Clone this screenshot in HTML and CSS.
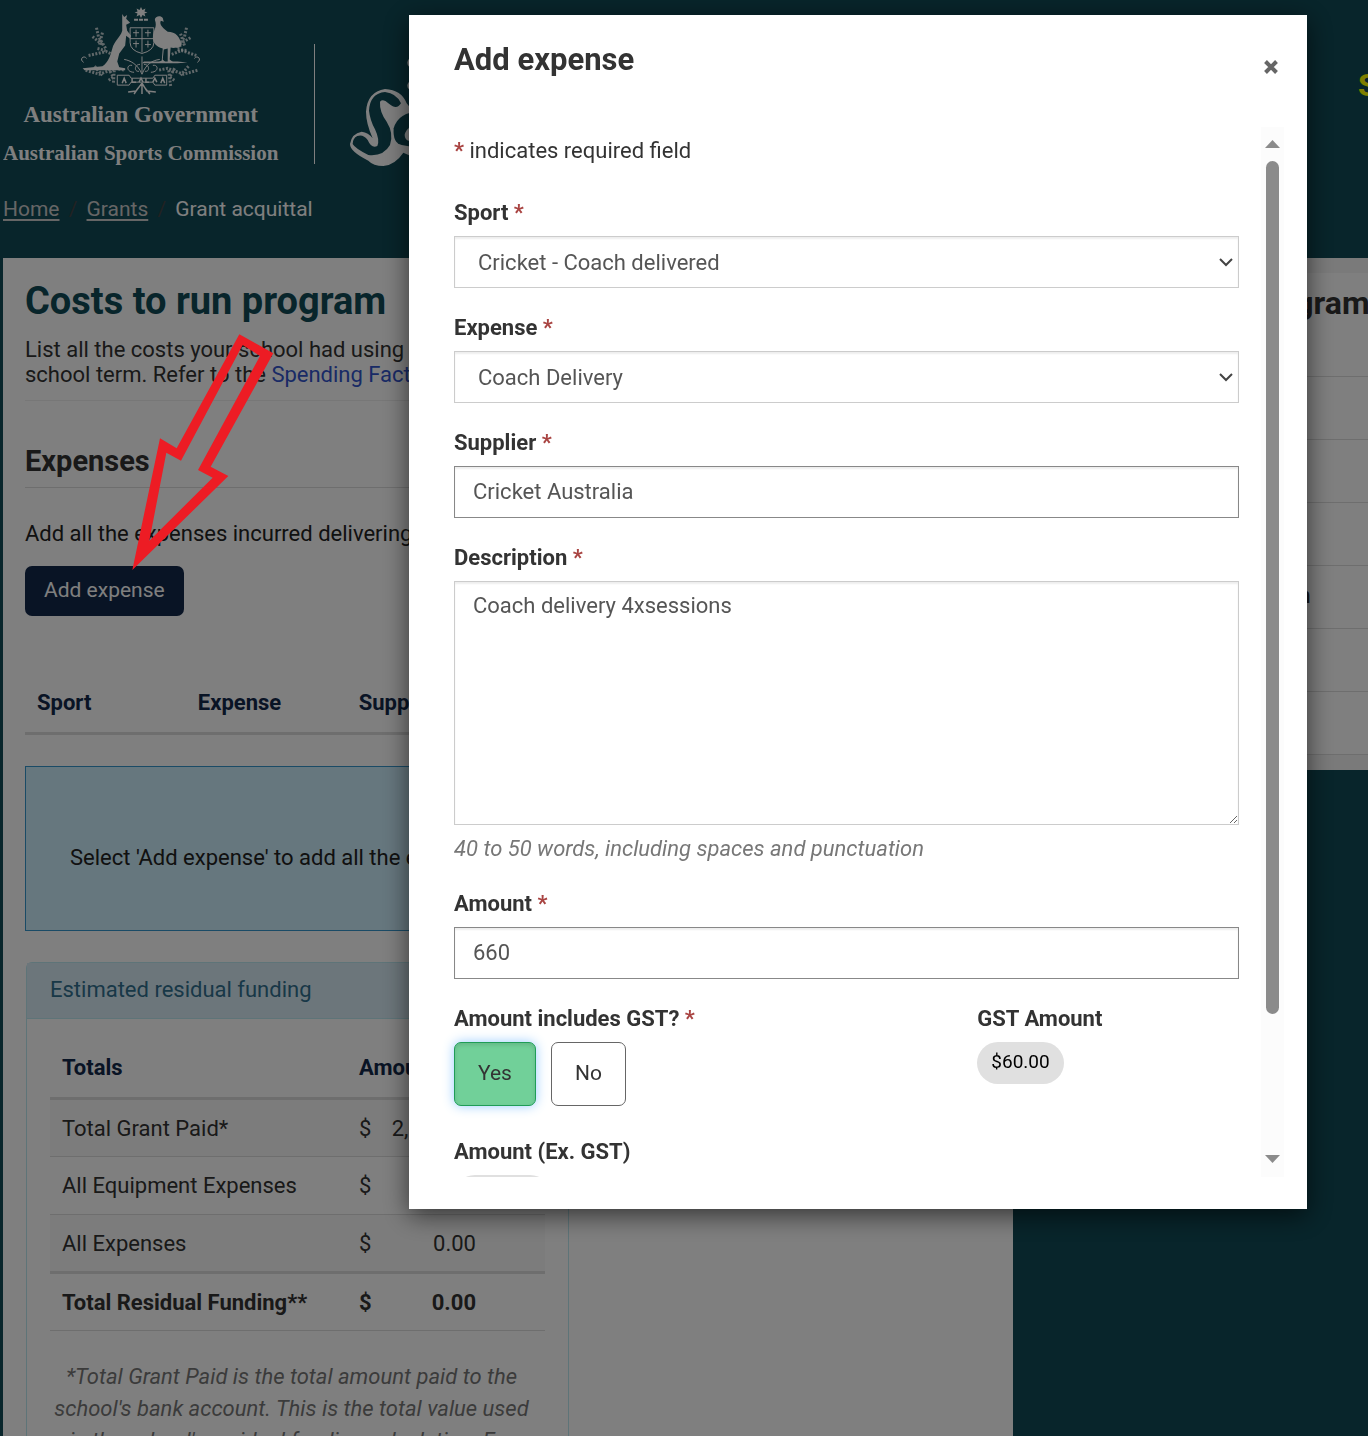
FILE: index.html
```html
<!DOCTYPE html>
<html lang="en">
<head>
<meta charset="utf-8">
<title>Grant acquittal</title>
<link rel="stylesheet" href="styles.css">
</head>
<body>
<div class="page">
  <header class="header">
    <div class="brand">
      <svg class="crest" viewBox="0 0 122 90" aria-hidden="true">
        <g fill="#fff">
          <path d="M61 0l1.500 3 3-1.500-1 3 3 1-3 1 1 3-3-1.500-1.500 3-1.500-3-3 1.500 1-3-3-1 3-1-1-3 3 1.500z"/>
          <path d="M42 7l2 3 3-2-1 4 4 4-4 2 1 6 4 5-1 3-4-3-1 10-6 8-2 8 2 6 6 1v2H4l-2-2 20-2c6-4 8-11 10-18 2-8 8-11 10-18z"/>
          <path d="M75 13c0-4 6-5 8-2l1 4-3-1c-2 4 3 8 7 11 8 0 13 5 14 15-5 1-8 2-11 1l-1 12 4 3h-6V42l-4 1-1 10 3 3h-8l4-2 1-12c-7-2-10-6-10-11 0-8 5-10 2-18z"/>
          <path d="M64 55h34l10 1-10 1H62z"/>
        </g>
        <g fill="none" stroke="#fff" stroke-width="1">
          <path d="M54 13h4M59 13h4M64 13h4" stroke-width="2"/>
          <path d="M50 21h24v15q0 8-12 11-12-3-12-11zM62 21v25M50 32h24M56 23v7M53 26h6M68 23v7M65 26h6M56 34v7M53 37h6M68 34v7M65 38h6"/>
          <path d="M62 68C58 58 50 54 44 53M62 68c4-10 10-14 18-15M62 66V50M60 58c-6 0-6 8-1 7M64 58c6 0 6 8 1 7M54 66c-8 0-8-8-2-7M71 66c8 0 8-8 2-7"/>
          <path d="M3 56c-5-3 0-8 3-4M118 56c5-3 0-8-3-4"/>
          <path d="M37 69h12l2 3h22l2-3h12v10H75l-2-3H51l-2 3H37z"/>
          <path d="M42 77l2-5 2 5M52 72v4h4M59 76l2-4 2 4M66 72v4h3M73 76l2-4 2 4M81 77l2-5 2 5" stroke-width="1.500"/>
          <path d="M62 77l-6 8-8 1M62 77l5 8 9 1M62 77v11M58 82l-4 6M65 82l5 6" stroke-width="1.500"/>
        </g>
        <g fill="none" stroke="#fff" stroke-opacity=".75" stroke-width="3" stroke-dasharray="2 1.500">
          <path d="M16 21l2 9 8 13M12 30l10 8M22 26l-3 12M17 42l8 2"/>
          <path d="M107 21l-2 9-8 13M111 31l-10 6M101 27l4 12M98 43l10 1"/>
          <path d="M8 49l18-4 8 4M117 49l-15-5-10 4"/>
          <path d="M5 64l14 4 16-6 10 2M14 60l8 9M28 62l5 9-6 4M34 64l-1 14"/>
          <path d="M118 64l-14 4-16-6-10 2M109 60l-8 9M95 62l-5 9 6 4M89 64l2 16"/>
        </g>
      </svg>
      <span class="brand-gov">Australian Government</span>
      <span class="brand-org">Australian Sports Commission</span>
    </div>
    <div class="partner">
      <svg viewBox="30 12 300 360" class="partner-logo" aria-hidden="true">
        <path fill="#fff" d="M30 312Q35 280 65 275Q85 277 98 295Q78 250 78 215Q82 155 135 147Q185 150 200 190L240 240V360L190 338Q165 375 130 378Q100 378 85 362Q30 335 30 312z"/>
        <path fill="#104a56" d="M183 190Q170 160 135 156Q90 160 87 212Q90 240 105 268Q120 300 112 318Q95 327 83 300Q70 282 52 288Q38 295 38 312Q45 325 85 345Q130 350 150 315Q162 280 140 245Q118 215 120 185Q130 175 145 190Q170 212 183 190z"/>
        <path fill="#104a56" d="M240 215Q175 215 161 265Q158 310 185 315L240 325z"/>
        <path fill="#fff" d="M240 255Q200 255 194 285Q194 302 210 303L240 300z"/>
        <circle cx="218" cy="68" r="16" fill="#fff"/><circle cx="215" cy="137" r="13" fill="#fff"/>
      </svg>
    </div>
    <a class="login" href="#">Sporting Schools</a>
  </header>
  <nav class="crumbs" aria-label="Breadcrumb">
    <a href="#">Home</a><span class="slash">/</span><a href="#">Grants</a><span class="slash">/</span><span>Grant acquittal</span>
  </nav>
  <div class="columns">
    <main class="sheet">
      <h1>Costs to run program</h1>
      <p class="intro">List all the costs your school had using the funding this<br>school term. Refer to the <a href="#">Spending Fact Sheet</a></p>
      <h2>Expenses</h2>
      <p class="lead">Add all the expenses incurred delivering the program</p>
      <button class="primary" type="button">Add expense</button>
      <table class="expenses">
        <thead><tr><th>Sport</th><th>Expense</th><th>Supplier</th><th></th><th></th><th></th></tr></thead>
      </table>
      <div class="notice">Select 'Add expense' to add all the expenses</div>
      <section class="panel">
        <h3>Estimated residual funding</h3>
        <div class="panel-body">
          <table class="totals">
            <colgroup><col class="col-name"><col class="col-sign"><col></colgroup>
            <thead><tr><th>Totals</th><th colspan="2">Amount</th></tr></thead>
            <tbody>
              <tr class="odd"><td>Total Grant Paid*</td><td>$</td><td class="num">2,000.00</td></tr>
              <tr><td>All Equipment Expenses</td><td>$</td><td class="num">0.00</td></tr>
              <tr class="odd"><td>All Expenses</td><td>$</td><td class="num">0.00</td></tr>
            </tbody>
            <tfoot><tr><td>Total Residual Funding**</td><td>$</td><td class="num">0.00</td></tr></tfoot>
          </table>
          <p class="note">*Total Grant Paid is the total amount paid to the school's bank account. This is the total value used in the school's residual funding calculation. For</p>
        </div>
      </section>
    </main>
    <aside class="side">
      <h2>Running the program</h2>
      <ul><li></li><li></li><li></li><li>Community organisation</li><li></li><li></li></ul>
    </aside>
  </div>
</div>

<div class="overlay">
  <section class="modal" role="dialog" aria-labelledby="modal-title">
    <div class="modal-head">
      <h2 id="modal-title">Add expense</h2>
      <button class="close" type="button" aria-label="Close"><svg viewBox="0 0 16 16" aria-hidden="true"><path d="M2.500 2.500l11 11M13.500 2.500l-11 11" stroke="#666" stroke-width="4"/></svg></button>
    </div>
    <div class="modal-body">
      <form class="form">
        <p class="hint"><span class="req">*</span> indicates required field</p>
        <div class="field">
          <label for="sport">Sport <span class="req">*</span></label>
          <div class="select"><select id="sport"><option>Cricket - Coach delivered</option></select><svg viewBox="0 0 14 9" aria-hidden="true"><path d="M1 1l6 6 6-6" fill="none" stroke="#444" stroke-width="2"/></svg></div>
        </div>
        <div class="field">
          <label for="expense">Expense <span class="req">*</span></label>
          <div class="select"><select id="expense"><option>Coach Delivery</option></select><svg viewBox="0 0 14 9" aria-hidden="true"><path d="M1 1l6 6 6-6" fill="none" stroke="#444" stroke-width="2"/></svg></div>
        </div>
        <div class="field">
          <label for="supplier">Supplier <span class="req">*</span></label>
          <input id="supplier" type="text" value="Cricket Australia">
        </div>
        <div class="field">
          <label for="description">Description <span class="req">*</span></label>
          <textarea id="description">Coach delivery 4xsessions</textarea>
          <p class="help">40 to 50 words, including spaces and punctuation</p>
        </div>
        <div class="field">
          <label for="amount">Amount <span class="req">*</span></label>
          <input id="amount" type="text" value="660">
        </div>
        <div class="gst">
          <div class="field">
            <span class="label">Amount includes GST? <span class="req">*</span></span>
            <div class="choices"><button class="choice chosen" type="button">Yes</button><button class="choice" type="button">No</button></div>
          </div>
          <div class="field">
            <span class="label">GST Amount</span>
            <output class="pill">$60.00</output>
          </div>
        </div>
        <div class="field">
          <span class="label">Amount (Ex. GST)</span>
          <output class="pill">$600.00</output>
        </div>
      </form>
      <div class="scrollbar" aria-hidden="true">
        <svg viewBox="0 0 15 8"><path d="M0 8L7.500 0 15 8z" fill="#8b8b8b"/></svg>
        <div class="track"><div class="thumb"></div></div>
        <svg viewBox="0 0 15 8"><path d="M0 0L7.500 8 15 0z" fill="#8b8b8b"/></svg>
      </div>
    </div>
  </section>
</div>
<svg class="pointer" viewBox="390 279 435 714" aria-hidden="true"><path fill="#ed1c24" fill-rule="evenodd" d="M718 283L820 340 632 680 685 708 397 990 480 595 530 625zM728 315L780 348 594 690 638 713 448 902 499 638 543 662z"/></svg>
</body>
</html>
```
FILE: styles.css
```css
* { box-sizing: border-box; }
html, body { height: 100%; }
body {
  margin: 0;
  overflow: hidden;
  background: #104a56;
  color: #333;
  font-family: Roboto, "Liberation Sans", sans-serif;
  font-size: 22px;
  line-height: 25px;
}
h1, h2, h3, p, ul { margin: 0; }
button, input, select, textarea { font: inherit; color: inherit; }
.page { height: 100%; overflow: hidden; padding-left: 3px; }

/* Site header */
.header {
  display: grid;
  grid-template-columns: auto 1fr 10px;
  height: 173px;
  overflow: hidden;
  color: #fff;
}
.brand {
  display: flex;
  flex-direction: column;
  align-items: center;
  padding-top: 7px;
  font: bold 23px/38px "Liberation Serif", serif;
}
.brand-org { font-size: 21px; }
.crest { width: 122px; height: 89px; }
.partner {
  margin: 44px 0 9px 36px;
  padding: 0 0 0 35px;
  border-left: 1px solid #fff;
}
.partner-logo { display: block; width: 100px; height: 120px; overflow: visible; }
.login {
  padding-top: 66px;
  color: #ff0;
  font-size: 32px;
  font-weight: bold;
  line-height: 38px;
  text-decoration: none;
  white-space: nowrap;
}
.crumbs { display: flex; height: 85px; padding-top: 24px; color: #fff; font-size: 21px; }
.crumbs a { color: #ccc; text-decoration-thickness: 2px; text-underline-offset: 3px; }
.slash { width: 27px; text-align: center; color: #444; }

.columns { display: grid; grid-template-columns: 74% 1fr; gap: 30px; align-items: start; }
.sheet { min-height: 1200px; padding: 22px 23px 0 22px; background: #fff; }
h1 { color: #104a56; font-size: 38px; line-height: 42px; }
.intro { padding: 15px 0 13px; border-bottom: 1px solid #eee; }
.intro a { color: #35c; text-decoration: none; }
.sheet h2 { padding: 43px 0 8px; border-bottom: 1px solid #ddd; font-size: 29px; line-height: 35px; }
.lead { margin: 33px 0 20px; color: #222; }
.primary {
  height: 50px;
  padding: 0 19px 2px;
  border: 0;
  border-radius: 7px;
  background: #12284a;
  color: #fff;
  font-size: 21px;
}
table { border-collapse: collapse; table-layout: fixed; width: 100%; }
th { text-align: left; color: #12284a; }
th, td { padding: 0 12px; }
.expenses { margin: 57px 0 31px; }
.expenses th { height: 60px; border-bottom: 3px solid #ddd; }
.notice {
  height: 165px;
  padding: 78px 44px 0;
  border: 1px solid #3596cc;
  background: #cdeefc;
  color: #222;
}
.panel { width: 543px; margin: 31px 0 0 1px; border: 1px solid #bce8f1; border-radius: 6px; }
.panel h3 {
  padding: 14px 23px 16px;
  border-bottom: 1px solid #bce8f1;
  background: #d9edf7;
  color: #31708f;
  font-size: 22px;
  font-weight: normal;
}
.panel-body { padding: 20px 23px; }
.totals th, .totals td { height: 58px; border-bottom: 1px solid #ddd; }
.totals th { height: 60px; border-bottom: 3px solid #ddd; }
.col-name { width: 297px; }
.col-sign { width: 36px; }
.totals td:nth-child(2) { padding-right: 0; }
.totals .num { padding: 0 69px 0 0; text-align: right; }
.totals .odd { background: #f9f9f9; }
.totals tfoot { font-weight: bold; }
.totals tfoot td { border-top: 3px solid #ddd; }
.note { margin-top: 30px; padding-right: 12px; color: #777; font-style: italic; line-height: 32px; text-align: center; }

/* Side column */
.side { overflow: hidden; padding: 15px 0; background: #f5f5f5; white-space: nowrap; }
.side h2 { height: 104px; padding: 11px 24px; border-bottom: 1px solid #ddd; background: #fff; font-size: 32px; line-height: 38px; }
.side ul { padding: 0; list-style: none; }
.side li { height: 63px; padding: 17px 24px; border-bottom: 1px solid #ddd; background: #fff; font-weight: bold; }

/* Dialog */
.overlay {
  position: fixed;
  inset: 0;
  padding: 15px 61px 0 409px;
  background: rgba(0, 0, 0, .5);
}
.modal { padding: 0 23px 32px 45px; background: #fff; box-shadow: 0 6px 24px rgba(0, 0, 0, .6); }
.modal-head { display: flex; justify-content: space-between; height: 112px; padding-top: 26px; }
.modal-head h2 { font-size: 31px; line-height: 38px; }
.close { width: 16px; height: 16px; margin: 18px 5px 0; padding: 0; border: 0; background: none; }
.close svg { display: block; width: 16px; }
.modal-body { display: flex; gap: 22px; height: 1050px; }
.form { flex: 1; padding: 11px 0 0 20px; margin-left: -20px; overflow: hidden; }
.hint { margin-bottom: 37px; }
.req { color: #a94442; font-weight: bold; }
.field { display: flex; flex-direction: column; align-items: flex-start; gap: 11px; margin-bottom: 27px; }
label, .label { font-weight: bold; }
.select { position: relative; width: 100%; }
.select svg { position: absolute; right: 6px; top: 22px; width: 14px; height: 9px; }
select, input, textarea {
  display: block;
  width: 100%;
  height: 52px;
  border: 1px solid #ccc;
  border-radius: 0;
  background: #fff;
  box-shadow: inset 0 2px 2px rgba(0, 0, 0, .07);
  color: #555;
}
select { appearance: none; padding: 0 23px; }
input { padding: 0 18px 2px; border-color: #888; }
textarea { height: 244px; padding: 11px 18px; resize: vertical; }
.help { padding-bottom: 3px; color: #777; font-style: italic; }
.gst { display: grid; grid-template-columns: 2fr 1fr; margin-bottom: 33px; }
.gst .field { margin-bottom: 0; }
.choices { display: flex; gap: 15px; }
.choice { height: 64px; padding: 0 23px 2px; border: 1px solid #666; border-radius: 7px; background: #fff; font-size: 21px; }
.chosen {
  border-color: #1f9d57;
  background: #71d099;
  box-shadow: inset 0 2px 4px rgba(0, 0, 0, .12), 0 0 12px #9cf;
}
.pill { height: 42px; padding: 7px 14px; border-radius: 21px; background: #e0e0e0; color: #000; font-size: 19px; }
.scrollbar {
  display: flex;
  flex-direction: column;
  align-items: center;
  width: 23px;
  padding: 13px 0 14px;
  background: #fcfcfc;
}
.scrollbar svg { width: 15px; height: 8px; }
.track { flex: 1; padding: 13px 0; }
.thumb { width: 13px; height: 87%; border-radius: 7px; background: #8b8b8b; }

.pointer { position: absolute; left: 130px; top: 333px; width: 145px; height: 238px; }
```
